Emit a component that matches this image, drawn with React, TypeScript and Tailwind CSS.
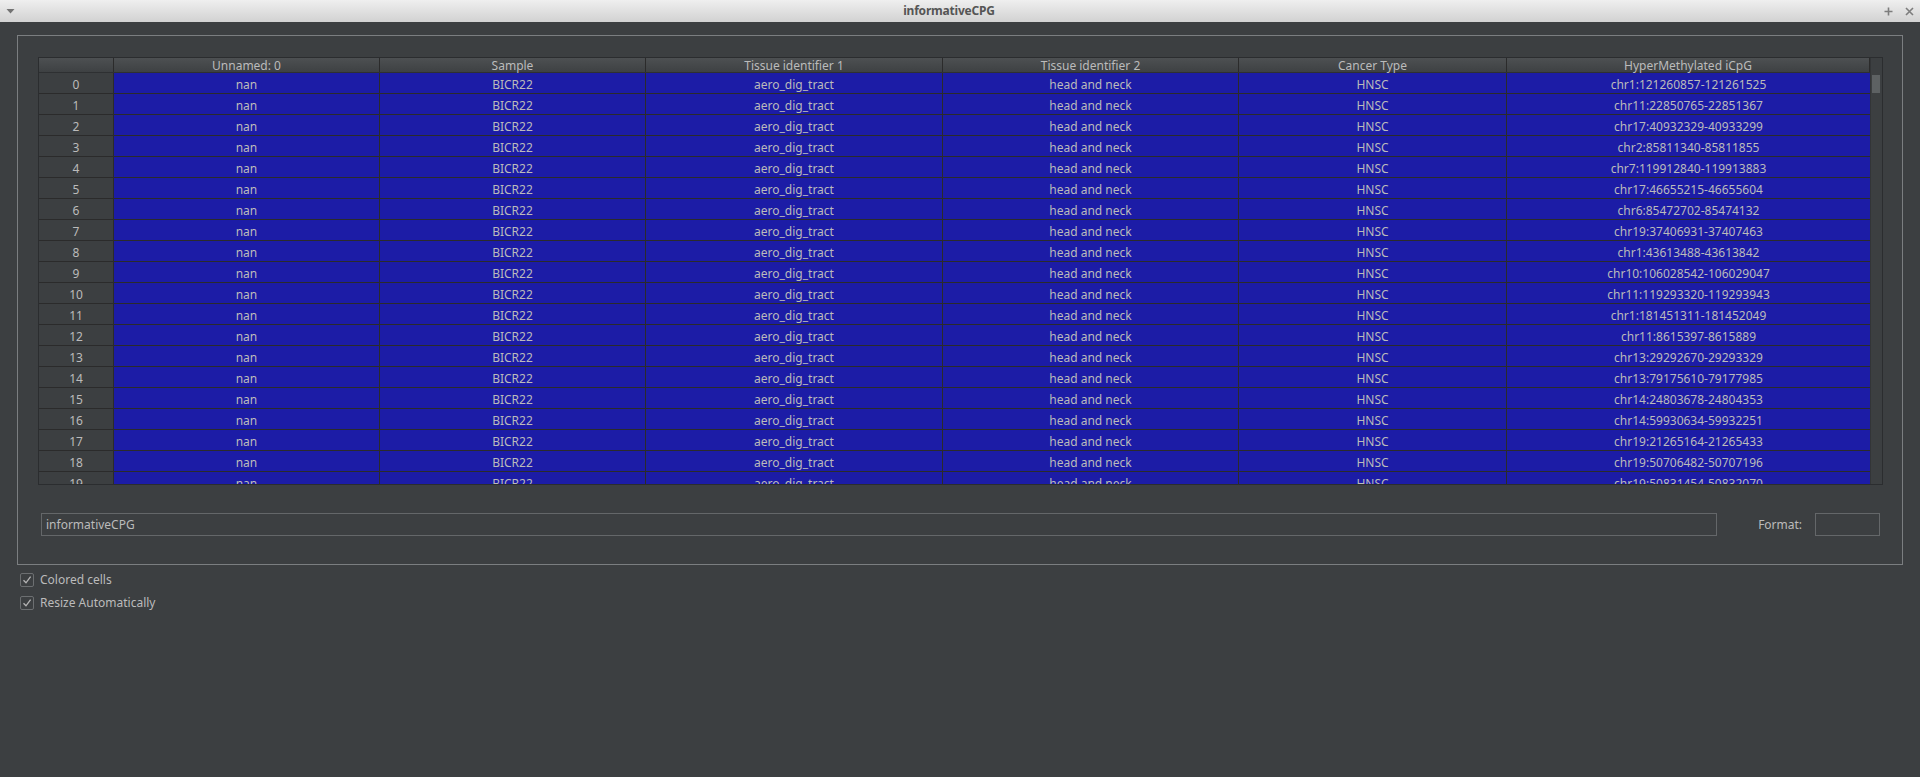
import React from "react";

const regions = [
  "chr1:121260857-121261525",
  "chr11:22850765-22851367",
  "chr17:40932329-40933299",
  "chr2:85811340-85811855",
  "chr7:119912840-119913883",
  "chr17:46655215-46655604",
  "chr6:85472702-85474132",
  "chr19:37406931-37407463",
  "chr1:43613488-43613842",
  "chr10:106028542-106029047",
  "chr11:119293320-119293943",
  "chr1:181451311-181452049",
  "chr11:8615397-8615889",
  "chr13:29292670-29293329",
  "chr13:79175610-79177985",
  "chr14:24803678-24804353",
  "chr14:59930634-59932251",
  "chr19:21265164-21265433",
  "chr19:50706482-50707196",
  "chr19:50831454-50832070",
];

const columns = [
  { title: "Unnamed: 0", width: "w-[266px]" },
  { title: "Sample", width: "w-[266px]" },
  { title: "Tissue identifier 1", width: "w-[297px]" },
  { title: "Tissue identifier 2", width: "w-[296px]" },
  { title: "Cancer Type", width: "w-[268px]" },
  { title: "HyperMethylated iCpG", width: "flex-1" },
];

const cell = "border-r border-[#2b2b2b] bg-[#1c1ca6] flex items-center justify-center pt-[4px]";

function Check({ label }: { label: string }) {
  return (
    <div className="flex items-center h-[23px] pl-[3px]">
      <div className="w-[14px] h-[14px] border border-[#6c6f71] rounded-[2px] flex items-center justify-center">
        <svg width="10" height="10" viewBox="0 0 10 10">
          <path d="M1.5 5.2 L4 7.8 L8.6 1.6" fill="none" stroke="#b5b5b5" strokeWidth="1.3" />
        </svg>
      </div>
      <span className="ml-[6px] text-[12px] text-[#bbbbbb]">{label}</span>
    </div>
  );
}

export default function App() {
  return (
    <div className="w-[1920px] h-[777px] bg-[#3c3f41] flex flex-col overflow-hidden font-['Noto_Sans',sans-serif]">
      {/* window title bar */}
      <div className="h-[22px] shrink-0 bg-gradient-to-b from-[#efefef] to-[#d2d2d2] flex items-center">
        <div className="w-[60px] pl-[6px] flex items-center">
          <svg width="9" height="6" viewBox="0 0 9 6">
            <path d="M0.5 1 L8.5 1 L4.5 5.5 Z" fill="#737373" />
          </svg>
        </div>
        <div className="flex-1 text-center pr-[22px] text-[12px] font-bold text-[#555555] tracking-[-0.2px]">
          informativeCPG
        </div>
        <div className="w-[60px] flex items-center justify-end gap-[12px] pr-[6px]">
          <svg width="9" height="9" viewBox="0 0 9 9">
            <path d="M4.5 0.5 V8.5 M0.5 4.5 H8.5" stroke="#7d7d7d" strokeWidth="1.6" />
          </svg>
          <svg width="9" height="9" viewBox="0 0 9 9">
            <path d="M1 1 L8 8 M8 1 L1 8" stroke="#7d7d7d" strokeWidth="1.6" />
          </svg>
        </div>
      </div>

      <div className="pt-[13px] px-[17px]">
        {/* group box */}
        <div className="h-[530px] border border-[#7b7e80] pt-[21px] pl-[20px] pr-[19px]">
          <div className="h-[428px] border border-[#2b2d2f] flex overflow-hidden">
            <div className="flex-1 flex flex-col overflow-hidden">
              <div className="h-[15px] shrink-0 flex bg-gradient-to-b from-[#4d5052] to-[#3e4143] border-b border-[#2e3032] text-[12px] text-[#bbbbbb]">
                <div className="w-[75px] border-r border-[#2b2b2b]" />
                {columns.map((c) => (
                  <div key={c.title} className={`${c.width} border-r border-[#2b2b2b] text-center leading-[12px] pt-[2px]`}>
                    {c.title}
                  </div>
                ))}
              </div>
              {regions.map((r, i) => (
                <div key={r} className="h-[21px] shrink-0 flex border-b border-[#2b2b2b] text-[12px] leading-[14px] text-[#bbbbbb]">
                  <div className="w-[75px] border-r border-[#2b2b2b] bg-[#3c3f41] flex items-center justify-center pt-[4px]">
                    {i}
                  </div>
                  <div className={`w-[266px] ${cell}`}>nan</div>
                  <div className={`w-[266px] ${cell}`}>BICR22</div>
                  <div className={`w-[297px] ${cell}`}>aero_dig_tract</div>
                  <div className={`w-[296px] ${cell}`}>head and neck</div>
                  <div className={`w-[268px] ${cell}`}>HNSC</div>
                  <div className="flex-1 bg-[#1c1ca6] flex items-center justify-center pt-[4px]">{r}</div>
                </div>
              ))}
            </div>
            {/* scrollbar */}
            <div className="w-[12px] shrink-0 bg-[#3c3f41] border-l border-[#333537] pt-[17px] pl-[1px] pr-[2px]">
              <div className="h-[18px] bg-[#5d6163]" />
            </div>
          </div>

          <div className="mt-[28px] pl-[3px] pr-[3px] flex items-center">
            <div className="w-[1678px] h-[23px] border border-[#646769] flex items-center px-[4px] text-[12px] text-[#bbbbbb]">
              informativeCPG
            </div>
            <span className="ml-[41px] text-[12px] text-[#bbbbbb]">Format:</span>
            <div className="ml-[13px] w-[65px] h-[23px] border border-[#646769]" />
          </div>
        </div>

        <div className="pt-[3px]">
          <Check label="Colored cells" />
          <Check label="Resize Automatically" />
        </div>
      </div>
    </div>
  );
}
